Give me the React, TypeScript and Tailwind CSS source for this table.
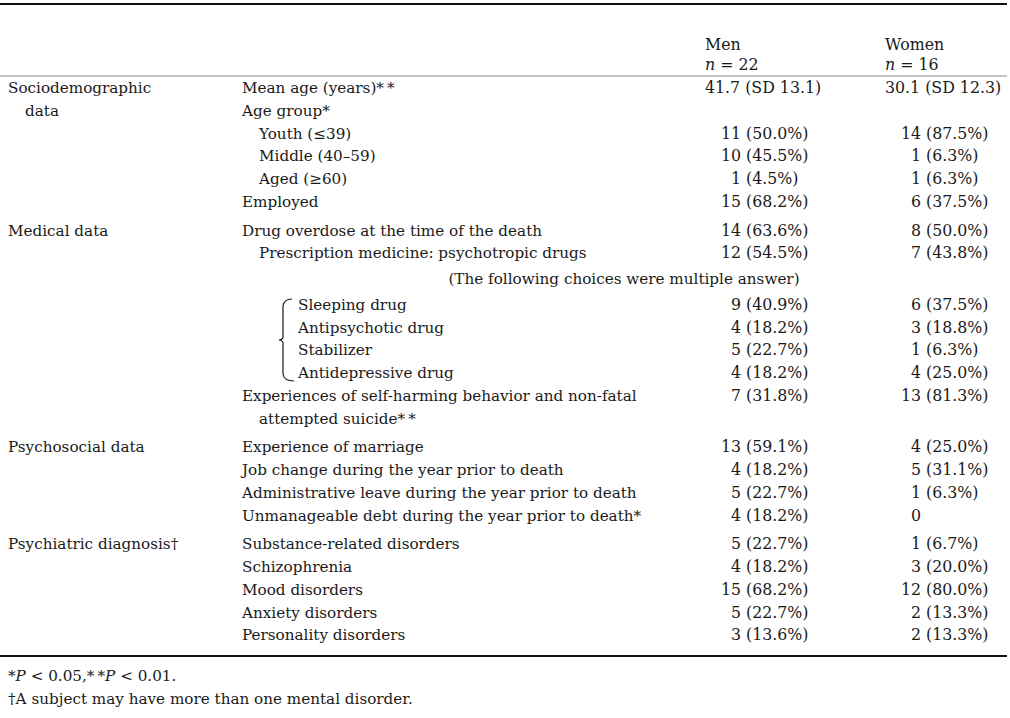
import React from "react";

type V = { n: string; p?: string } | { raw: string } | null;

function Val({ v }: { v: V }) {
  if (!v) return <div />;
  if ("raw" in v) return <div className="whitespace-pre text-[15.8px]">{v.raw}</div>;
  return (
    <div className="flex whitespace-pre pl-[16px] text-[15.8px]">
      <span className="inline-block w-[20px] text-right">{v.n}</span>
      {v.p ? <span>{` (${v.p}%)`}</span> : null}
    </div>
  );
}

type R = {
  c1?: React.ReactNode;
  c1Indent?: boolean;
  c2: React.ReactNode;
  sub?: boolean;
  men?: V;
  women?: V;
  gap?: boolean;
};

const v = (n: string, p?: string): V => ({ n, p });

function Row({ r }: { r: R }) {
  const g = r.gap ? "pt-[6px]" : "";
  return (
    <>
      <div className={`${g} ${r.c1Indent ? "pl-[17px]" : ""} whitespace-nowrap`}>{r.c1}</div>
      <div className={`${g} ${r.sub ? "pl-[17px]" : ""} whitespace-nowrap`}>{r.c2}</div>
      <div className={g}>
        <Val v={r.men ?? null} />
      </div>
      <div className={g}>
        <Val v={r.women ?? null} />
      </div>
    </>
  );
}

function Brace() {
  return (
    <svg width="22" height="91" viewBox="0 0 22 91" className="shrink-0">
      <path
        d="M16 5 Q8 5 7 12 L7 43 Q7 45.5 3 46 Q7 46.5 7 49 L7 80 Q8 87 18 87"
        fill="none"
        stroke="#1a1a1a"
        strokeWidth="1.2"
      />
    </svg>
  );
}

const dbl = "*\u2009*";

export default function App() {
  const grp1: R[] = [
    { c1: "Sociodemographic", c2: `Mean age (years)${dbl}`, men: { raw: "41.7 (SD 13.1)" }, women: { raw: "30.1 (SD 12.3)" } },
    { c1: "data", c1Indent: true, c2: "Age group*" },
    { c2: "Youth (≤39)", sub: true, men: v("11", "50.0"), women: v("14", "87.5") },
    { c2: "Middle (40–59)", sub: true, men: v("10", "45.5"), women: v("1", "6.3") },
    { c2: "Aged (≥60)", sub: true, men: v("1", "4.5"), women: v("1", "6.3") },
    { c2: "Employed", men: v("15", "68.2"), women: v("6", "37.5") },
    { c1: "Medical data", c2: "Drug overdose at the time of the death", men: v("14", "63.6"), women: v("8", "50.0"), gap: true },
    { c2: "Prescription medicine: psychotropic drugs", sub: true, men: v("12", "54.5"), women: v("7", "43.8") },
  ];
  const brace = [
    { t: "Sleeping drug", m: v("9", "40.9"), w: v("6", "37.5") },
    { t: "Antipsychotic drug", m: v("4", "18.2"), w: v("3", "18.8") },
    { t: "Stabilizer", m: v("5", "22.7"), w: v("1", "6.3") },
    { t: "Antidepressive drug", m: v("4", "18.2"), w: v("4", "25.0") },
  ];
  const grp2: R[] = [
    { c2: "Experiences of self-harming behavior and non-fatal", men: v("7", "31.8"), women: v("13", "81.3") },
    { c2: `attempted suicide${dbl}`, sub: true },
    { c1: "Psychosocial data", c2: "Experience of marriage", men: v("13", "59.1"), women: v("4", "25.0"), gap: true },
    { c2: "Job change during the year prior to death", men: v("4", "18.2"), women: v("5", "31.1") },
    { c2: "Administrative leave during the year prior to death", men: v("5", "22.7"), women: v("1", "6.3") },
    { c2: "Unmanageable debt during the year prior to death*", men: v("4", "18.2"), women: v("0") },
    { c1: "Psychiatric diagnosis†", c2: "Substance-related disorders", men: v("5", "22.7"), women: v("1", "6.7"), gap: true },
    { c2: "Schizophrenia", men: v("4", "18.2"), women: v("3", "20.0") },
    { c2: "Mood disorders", men: v("15", "68.2"), women: v("12", "80.0") },
    { c2: "Anxiety disorders", men: v("5", "22.7"), women: v("2", "13.3") },
    { c2: "Personality disorders", men: v("3", "13.6"), women: v("2", "13.3") },
  ];

  return (
    <div className="w-[1010px] h-[718px] overflow-hidden bg-white text-[#1a1a1a] font-['DejaVu_Serif',serif] text-[15.2px] leading-[22.75px]">
      <div className="pt-[3px]">
        <div className="h-[2px] bg-[#111] mr-[3px]" />
        {/* header */}
        <div className="grid grid-cols-[242px_463px_180px_125px] pt-[30px] pb-[0px] leading-[20px] text-[15.8px]">
          <div />
          <div />
          <div>
            <div>Men</div>
            <div>
              <i>n</i> = 22
            </div>
          </div>
          <div>
            <div>Women</div>
            <div>
              <i>n</i> = 16
            </div>
          </div>
        </div>
        <div className="h-[2px] bg-[#c4c4c4] mr-[3px]" />
        {/* body */}
        <div className="grid grid-cols-[234px_463px_180px_125px] pl-[8px] pb-[8px]">
          {grp1.map((r, i) => (
            <Row key={"a" + i} r={r} />
          ))}
          <div />
          <div className="col-span-3 text-center pt-[3px] pb-[3px] pr-[4px]">
            (The following choices were multiple answer)
          </div>
          <div />
          <div className="flex pl-[34px]">
            <Brace />
            <div>
              {brace.map((b) => (
                <div key={b.t}>{b.t}</div>
              ))}
            </div>
          </div>
          <div>
            {brace.map((b) => (
              <Val key={b.t} v={b.m} />
            ))}
          </div>
          <div>
            {brace.map((b) => (
              <Val key={b.t} v={b.w} />
            ))}
          </div>
          {grp2.map((r, i) => (
            <Row key={"b" + i} r={r} />
          ))}
        </div>
        <div className="h-[2px] bg-[#111] mr-[3px]" />
        <div className="pl-[8px] pt-[8px] leading-[23px]">
          <div>
            *<i>P</i> &lt; 0.05,{dbl}
            <i>P</i> &lt; 0.01.
          </div>
          <div>†A subject may have more than one mental disorder.</div>
        </div>
      </div>
    </div>
  );
}
